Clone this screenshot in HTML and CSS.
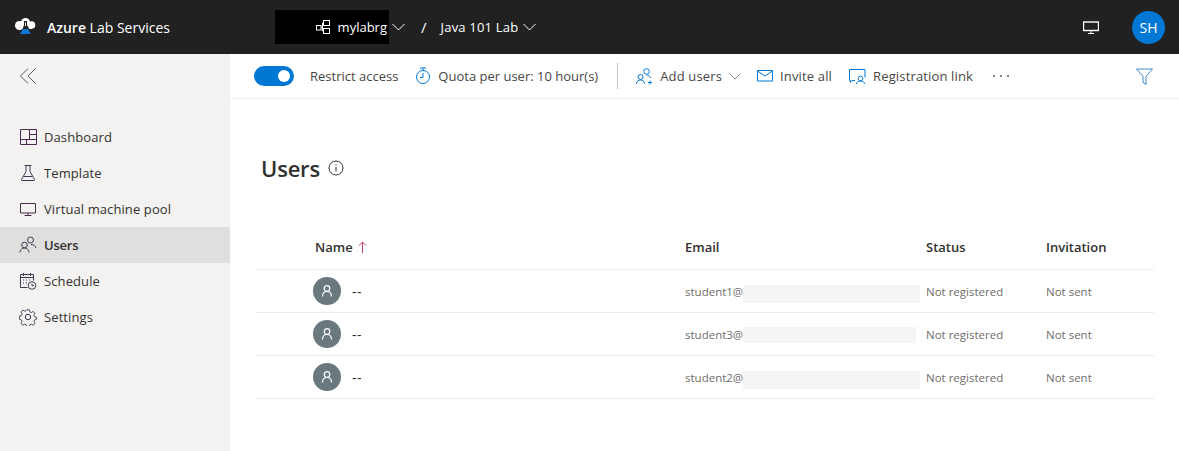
FILE: index.html
```html
<!DOCTYPE html>
<html>
  <head>
    <title>Azure Lab Services</title>
    <link rel="stylesheet" href="styles.css">
  </head>
  <body>
    <header class="topbar">
      <div class="brand">
        <svg class="brand-logo" width="22" height="18" viewBox="0 0 22 18">
          <circle cx="5.500" cy="7.500" r="4.500" fill="#fff"/>
          <circle cx="11.500" cy="4.500" r="4.500" fill="#fff"/>
          <circle cx="17.500" cy="7" r="3.800" fill="#fff"/>
          <path d="M5 11h13v-3h-13z" fill="#fff"/>
          <path d="M10 3h3v4l5.500 9.500h-12l3.500-9.500z" fill="#212121"/>
          <path d="M11.500 4.500v3.500" stroke="#fff" stroke-width="1"/>
          <path d="M9 11h5l3 5h-11z" fill="#0f78d2"/>
        </svg>
        <span class="brand-name"><b>Azure</b> Lab Services</span>
      </div>
      <div class="crumb-mask">
        <svg class="rg-icon" width="16" height="15" viewBox="0 0 16 15" fill="none" stroke="#fff">
          <path d="M6 7.500h1.500M7.500 3v8M7.500 3h1M7.500 11h1"/>
          <rect x="1.500" y="5.500" width="4.500" height="4.500"/>
          <rect x="8.500" y=".5" width="6" height="5"/>
          <rect x="8.500" y="8.500" width="6" height="5"/>
        </svg>
        <span>mylabrg</span>
      </div>
      <svg class="chevron first" width="13" height="8" viewBox="0 0 13 8" fill="none" stroke="#fff"><path d="M.5 1l6 6 6-6"/></svg>
      <span class="crumb-sep">/</span>
      <span class="crumb">Java 101 Lab</span>
      <svg class="chevron" width="13" height="8" viewBox="0 0 13 8" fill="none" stroke="#fff"><path d="M.5 1l6 6 6-6"/></svg>
      <svg class="monitor" width="16" height="13" viewBox="0 0 16 13" fill="none" stroke="#fff"><rect x=".5" y="1" width="15" height="8.500" stroke-width="1.400"/><path d="M8 9.500v2.500M5 12.500h6"/></svg>
      <div class="avatar">SH</div>
    </header>

    <div class="page">
      <nav class="sidebar">
        <div class="collapse">
          <svg width="16" height="16" viewBox="0 0 16 16" fill="none" stroke="#5b5766"><path d="M8 .5L.5 8 8 15.500M15.500.5L8 8l7.500 7.500"/></svg>
        </div>
        <a class="nav-item">
          <svg width="18" height="18" viewBox="0 0 18 18" fill="none" stroke="#4a2a4e"><path d="M1.500 1.500h16v15h-16zM1.500 11.500h16M10.500 1.500v10M7.500 11.500v5M10.500 6.500h7"/></svg>
          Dashboard
        </a>
        <a class="nav-item">
          <svg width="18" height="18" viewBox="0 0 18 18" fill="none" stroke="#3d3a50"><path d="M5.500 1.500h7M7 1.500v6L2.500 15.500c-.3.700 0 1 .7 1h11.600c.7 0 1-.3.700-1L11 7.500v-6M4.500 12.500h9"/></svg>
          Template
        </a>
        <a class="nav-item">
          <svg width="18" height="18" viewBox="0 0 18 18" fill="none" stroke="#4a2a4e"><path d="M1.500 3.500h15v9.500h-15zM9 13v3M5.500 15.500h7"/></svg>
          Virtual machine pool
        </a>
        <a class="nav-item active">
          <svg width="18" height="18" viewBox="0 0 18 18" fill="none" stroke="#3d3a50"><circle cx="11.500" cy="4" r="3"/><circle cx="5.500" cy="9" r="2.800"/><path d="M1 16.500c0-2.500 2-4.500 4.500-4.500s4.500 2 4.500 4.500M12 8.500c2.500 0 4.500 1 5 3.500"/></svg>
          Users
        </a>
        <a class="nav-item">
          <svg width="18" height="18" viewBox="0 0 18 18" fill="none" stroke="#3d3a50"><path d="M8.500 15.500h-7v-13h13v6M1.500 5.500h13M4.500 1v3M11.500 1v3M4 8h1M7 8h1M10 8h1M4 11h1M7 11h1"/><circle cx="13" cy="13.500" r="3.800"/><path d="M13 11.500v2.200h2"/></svg>
          Schedule
        </a>
        <a class="nav-item">
          <svg width="18" height="18" viewBox="0 0 18 18" fill="none" stroke="#3d3a50"><circle cx="9" cy="9" r="2.700"/><path d="M7.500 1h3l.5 2.300 1.800.8 2-1.300 2 2.100-1.300 2 .8 1.800 2 .5v2.600l-2 .5-.8 1.800 1.300 2-2 2.100-2-1.300-1.800.8-.5 2h-3l-.5-2-1.800-.8-2 1.300-2-2.100 1.300-2-.8-1.800-2-.5V7.700l2-.5.8-1.800-1.300-2 2-2.100 2 1.300 1.800-.8z" transform="translate(.9 .9) scale(.9)"/></svg>
          Settings
        </a>
      </nav>

      <main class="content">
        <div class="toolbar">
          <div class="toggle"><span class="knob"></span></div>
          <span class="tool-label restrict">Restrict access</span>
          <div class="tool quota">
            <svg width="16" height="18" viewBox="0 0 16 18" fill="none" stroke="#0078d4"><path d="M5 1h6M8 1v2.500"/><circle cx="8" cy="10" r="6.500"/><path d="M8 6v4.500h-3"/></svg>
            <span>Quota per user: 10 hour(s)</span>
          </div>
          <div class="tool-divider"></div>
          <div class="tool add">
            <svg width="17" height="17" viewBox="0 0 17 17" fill="none" stroke="#0078d4"><circle cx="10.500" cy="3.500" r="2.800"/><circle cx="4.500" cy="9" r="2.500"/><path d="M.5 16c0-2.500 1.700-4 4-4s4 1.500 4 4M10.500 7c2 0 3.500 1 4 3M14 12.500v4M12 14.500h4"/></svg>
            <span>Add users</span>
            <svg class="tool-chevron" width="12" height="7" viewBox="0 0 12 7" fill="none" stroke="#8a8886"><path d="M.5.500l5.500 5.500 5.500-5.500"/></svg>
          </div>
          <div class="tool invite">
            <svg width="16" height="12" viewBox="0 0 16 12" fill="none" stroke="#0078d4"><path d="M.5.500h15v10.500h-15zM.5 1l7.500 5 7.500-5"/></svg>
            <span>Invite all</span>
          </div>
          <div class="tool link">
            <svg width="17" height="17" viewBox="0 0 17 17" fill="none" stroke="#0078d4"><path d="M6 12.500h-3l-1.500 2v-2h-1v-11h15.500v8"/><circle cx="11.500" cy="10.500" r="2.300"/><path d="M7.500 16c0-2 1.800-3 4-3s4 1 4 3"/></svg>
            <span>Registration link</span>
          </div>
          <div class="more"><i></i><i></i><i></i></div>
          <svg class="filter" width="17" height="17" viewBox="0 0 17 17" fill="none" stroke="#3f87c4"><path d="M.5 1h16l-6.500 7.500v8l-3-2v-6z"/></svg>
        </div>

        <div class="title-row">
          <h1>Users</h1>
          <svg width="16" height="16" viewBox="0 0 16 16" fill="none" stroke="#323130"><circle cx="8" cy="8" r="7"/><path d="M8 7v4.500M8 4.500v1.200"/></svg>
        </div>

        <div class="users">
          <div class="row head">
            <div class="name-col">Name
              <svg class="sort" width="9" height="12" viewBox="0 0 9 12" fill="none" stroke="#c2406a"><path d="M4.500 12V1M1 4.500l3.500-3.500 3.500 3.500"/></svg>
            </div>
            <div>Email</div>
            <div>Status</div>
            <div>Invitation</div>
          </div>
          <div class="row">
            <div class="name-col">
              <span class="persona"><svg width="12" height="12" viewBox="0 0 12 12" fill="none" stroke="#fff" stroke-width="1.200"><circle cx="6" cy="3.500" r="2.800"/><path d="M1.500 11.500c0-3 1.500-5 4.500-5s4.500 2 4.500 5"/></svg></span>
              <span class="dash">--</span>
            </div>
            <div class="email"><span class="addr">student1@</span><span class="smudge s1"></span></div>
            <div>Not registered</div>
            <div>Not sent</div>
          </div>
          <div class="row">
            <div class="name-col">
              <span class="persona"><svg width="12" height="12" viewBox="0 0 12 12" fill="none" stroke="#fff" stroke-width="1.200"><circle cx="6" cy="3.500" r="2.800"/><path d="M1.500 11.500c0-3 1.500-5 4.500-5s4.500 2 4.500 5"/></svg></span>
              <span class="dash">--</span>
            </div>
            <div class="email"><span class="addr">student3@</span><span class="smudge s2"></span></div>
            <div>Not registered</div>
            <div>Not sent</div>
          </div>
          <div class="row">
            <div class="name-col">
              <span class="persona"><svg width="12" height="12" viewBox="0 0 12 12" fill="none" stroke="#fff" stroke-width="1.200"><circle cx="6" cy="3.500" r="2.800"/><path d="M1.500 11.500c0-3 1.500-5 4.500-5s4.500 2 4.500 5"/></svg></span>
              <span class="dash">--</span>
            </div>
            <div class="email"><span class="addr">student2@</span><span class="smudge s1"></span></div>
            <div>Not registered</div>
            <div>Not sent</div>
          </div>
        </div>
      </main>
    </div>
  </body>
</html>
```

FILE: styles.css
```css
html,
body {
  margin: 0;
  padding: 0;
  height: 100%;
  overflow: hidden;
}

body {
  font-family: "Open Sans", "Noto Sans", Arial, sans-serif;
  font-size: 13px;
  color: #323130;
  background-color: #fff;
}

.topbar {
  display: flex;
  align-items: center;
  height: 54px;
  background-color: #212121;
  color: #fff;
}

.brand {
  display: flex;
  align-items: center;
  width: 275px;
  padding-left: 14px;
  box-sizing: border-box;
}

.brand-name {
  margin-left: 11px;
  font-size: 14px;
}

.brand-name b {
  font-weight: 600;
}

.crumb-mask {
  display: flex;
  align-items: center;
  justify-content: flex-end;
  width: 114px;
  height: 34px;
  padding-right: 2px;
  box-sizing: border-box;
  background-color: #000;
  font-size: 13px;
}

.rg-icon {
  margin-right: 7px;
}

.chevron.first {
  margin-left: 3px;
}

.crumb-sep {
  margin-left: 16px;
  font-size: 15px;
}

.crumb {
  margin-left: 14px;
  font-size: 13px;
  letter-spacing: 0.2px;
}

.topbar .chevron:not(.first) {
  margin-left: 5px;
}

.monitor {
  margin-left: auto;
}

.avatar {
  display: flex;
  align-items: center;
  justify-content: center;
  width: 33px;
  height: 33px;
  margin: 0 14px 0 33px;
  border-radius: 50%;
  background-color: #0078d4;
  font-size: 14px;
}

.page {
  display: flex;
  height: 397px;
}

.sidebar {
  width: 230px;
  flex-shrink: 0;
  background-color: #f3f2f1;
}

.collapse {
  display: flex;
  align-items: center;
  height: 44px;
  padding-left: 20px;
  margin-bottom: 21px;
}

.nav-item {
  display: flex;
  align-items: center;
  gap: 7px;
  height: 36px;
  padding-left: 19px;
  letter-spacing: 0.1px;
  color: #323130;
}

.nav-item.active {
  background-color: #e1dfdd;
  font-weight: 600;
  letter-spacing: -0.2px;
}

.content {
  flex: 1;
  min-width: 0;
}

.toolbar {
  display: flex;
  align-items: center;
  height: 44px;
  padding-left: 24px;
  border-bottom: 1px solid #edebe9;
  color: #484644;
}

.toggle {
  display: flex;
  align-items: center;
  justify-content: flex-end;
  width: 40px;
  height: 20px;
  padding-right: 4px;
  box-sizing: border-box;
  border-radius: 10px;
  background-color: #0078d4;
}

.knob {
  width: 12px;
  height: 12px;
  border-radius: 50%;
  background-color: #fff;
}

.restrict {
  margin-left: 16px;
}

.tool {
  display: flex;
  align-items: center;
  gap: 7px;
}

.quota {
  margin-left: 17px;
}

.tool-divider {
  width: 1px;
  height: 26px;
  margin: 0 18px 0 19px;
  background-color: #c8c6c4;
}

.add,
.invite,
.link {
  letter-spacing: 0.15px;
}

.tool-chevron {
  margin-left: 0;
}

.invite {
  margin-left: 16px;
}

.link {
  margin-left: 17px;
}

.more {
  display: flex;
  gap: 5px;
  margin-left: 20px;
}

.more i {
  width: 2px;
  height: 2px;
  border-radius: 50%;
  background-color: #605e5c;
}

.filter {
  margin-left: auto;
  margin-right: 26px;
}

.title-row {
  display: flex;
  align-items: center;
  gap: 8px;
  height: 40px;
  margin-top: 49px;
  padding-left: 31px;
}

h1 {
  margin: 0;
  font-size: 22px;
  font-weight: 600;
  letter-spacing: -0.2px;
}

.users {
  margin: 38px 25px 0;
}

.row {
  display: grid;
  grid-template-columns: 430px 241px 120px 1fr;
  align-items: center;
  height: 42px;
  border-bottom: 1px solid #edebe9;
  font-size: 11.5px;
  color: #6f6d6b;
}

.row.head {
  padding-bottom: 1px;
  font-size: 13px;
  font-weight: 600;
  color: #323130;
}

.name-col {
  display: flex;
  align-items: center;
  padding-left: 58px;
}

.head .name-col {
  padding-left: 60px;
  gap: 5px;
}

.persona {
  display: flex;
  align-items: center;
  justify-content: center;
  width: 28px;
  height: 28px;
  border-radius: 50%;
  background-color: #69797e;
}

.dash {
  margin-left: 11px;
  font-size: 14px;
  letter-spacing: 0.5px;
  color: #323130;
}

.email {
  display: flex;
  align-items: center;
}

.addr {
  width: 58px;
  flex-shrink: 0;
}

.smudge {
  height: 18px;
  margin-top: 6px;
  background-color: #f5f5f5;
}

.s1 {
  width: 177px;
}

.s2 {
  width: 172px;
  height: 16px;
  margin-top: 2px;
  margin-left: 1px;
}
```
